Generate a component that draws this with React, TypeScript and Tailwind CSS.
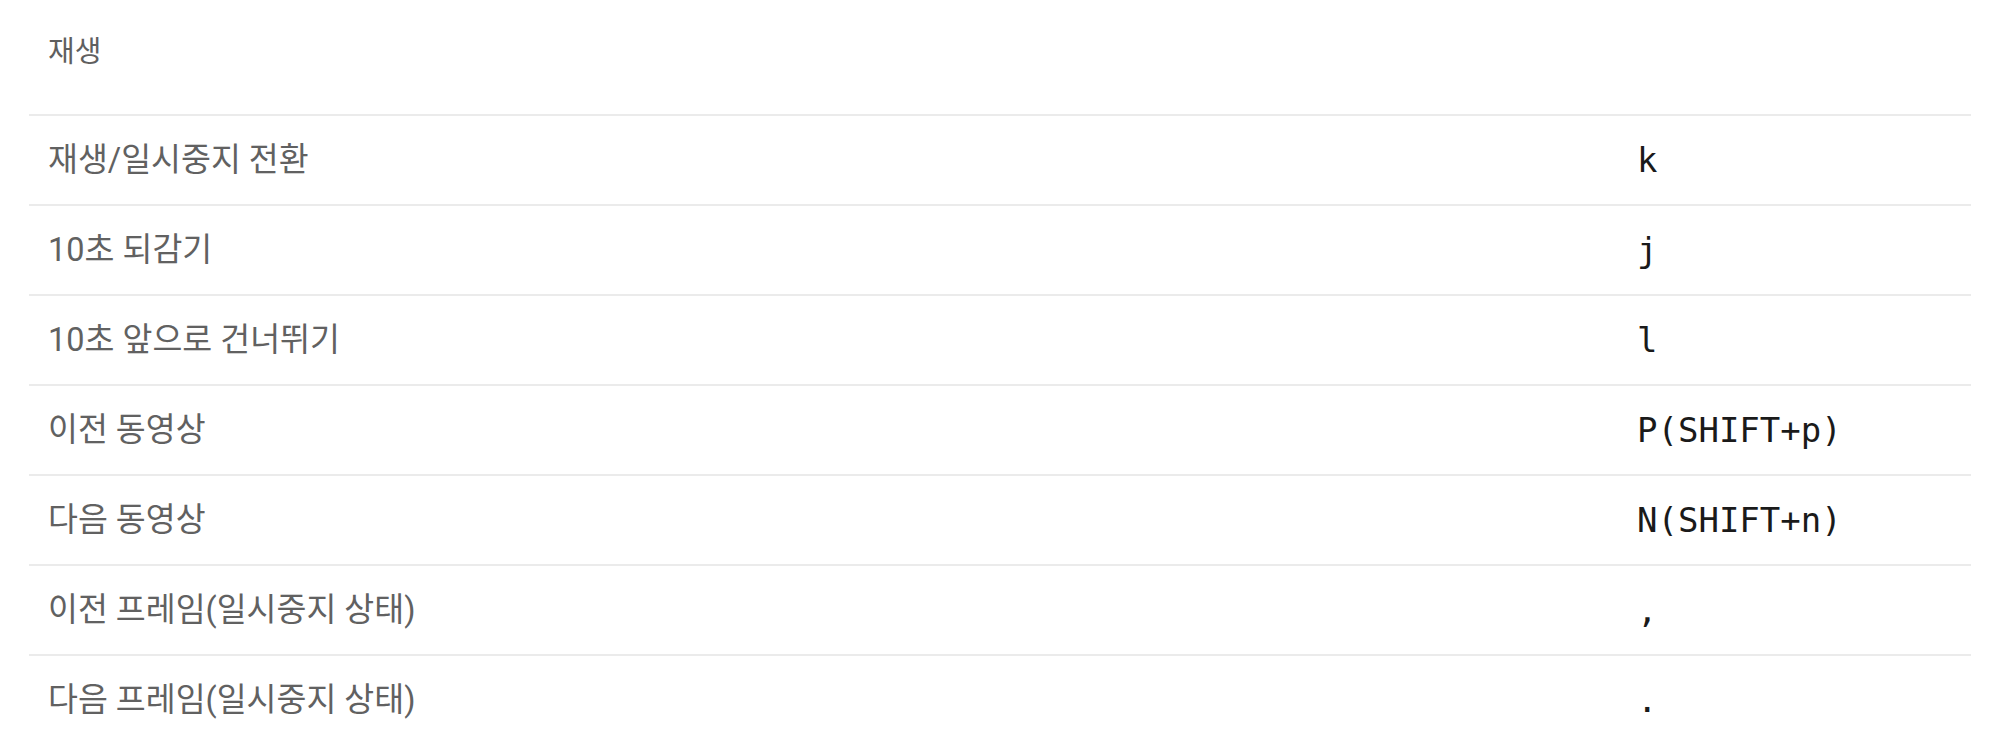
const rows = [
  { label: '재생/일시중지 전환', key: 'k' },
  { label: '10초 되감기', key: 'j' },
  { label: '10초 앞으로 건너뛰기', key: 'l' },
  { label: '이전 동영상', key: 'P(SHIFT+p)' },
  { label: '다음 동영상', key: 'N(SHIFT+n)' },
  { label: '이전 프레임(일시중지 상태)', key: ',' },
  { label: '다음 프레임(일시중지 상태)', key: '.' },
];

const sans = `font-['Roboto','Noto_Sans_CJK_KR',sans-serif]`;
const mono = `font-['DejaVu_Sans_Mono','Liberation_Mono',monospace]`;

const App = () => {
  return (
    <div className="w-full h-[734px] overflow-hidden bg-white px-[29px]">
      <div className={`h-[114px] flex items-center pl-[19px] pb-2 text-[29px] text-[#5f5f5f] ${sans}`}>
        재생
      </div>
      {rows.map((r) => (
        <div key={r.label} className="h-[90px] flex items-center border-t-2 border-[#ebebeb]">
          <div className={`w-[1608px] pl-[19px] text-[32.5px] text-[#616161] ${sans}`}>{r.label}</div>
          <div className={`text-[34px] text-[#1a1a1a] ${mono}`}>{r.key}</div>
        </div>
      ))}
    </div>
  );
};

export default App;
